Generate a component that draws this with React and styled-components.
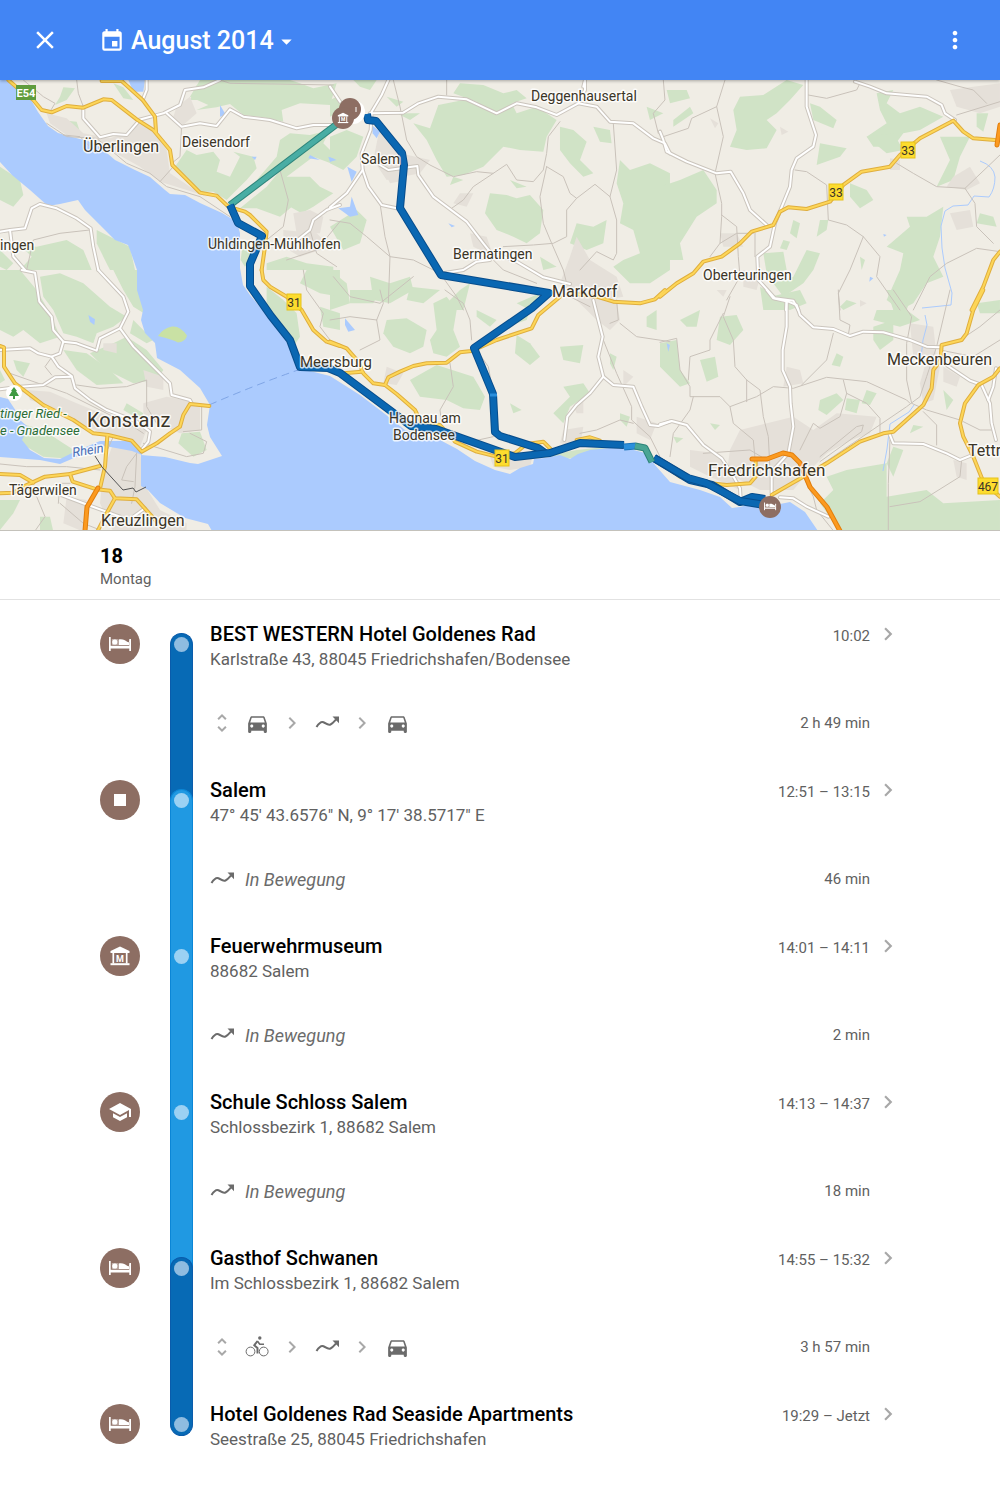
import styled, { createGlobalStyle } from 'styled-components';
import {
  MdArrowDropDown,
  MdChevronRight,
  MdClose,
  MdDirectionsCar,
  MdEvent,
  MdMoreVert,
  MdSchool,
  MdUnfoldMore,
} from 'react-icons/md';

const GlobalStyle = createGlobalStyle`
  body {
    margin: 0;
    background: #fff;
    font-family: Roboto, sans-serif;
    color: #000;
  }
`;

const StyledHeader = styled.header`
  display: flex;
  align-items: center;
  height: 80px;
  padding: 0 33px;
  box-sizing: border-box;
  background: #4285f4;
  box-shadow: 0 1px 3px #0000004d;
  position: relative;
  z-index: 1;
`;

const StyledIconButton = styled.button`
  display: flex;
  align-items: center;
  justify-content: center;
  width: 24px;
  height: 24px;
  padding: 0;
  border: 0;
  background: none;
  color: ${({ $color }) => $color || '#fff'};
  cursor: pointer;
  svg {
    flex: none;
  }
`;

const StyledMonthButton = styled.button`
  display: flex;
  align-items: center;
  margin: 0 auto 0 42px;
  padding: 2px 0 0;
  border: 0;
  background: none;
  color: #fff;
  font: 500 25px/32px Roboto, sans-serif;
  cursor: pointer;
  .event {
    margin-right: 6px;
  }
`;

const StyledMap = styled.section`
  background: #f0ede5;
  border-bottom: 1px solid #0000002e;
  > svg {
    display: block;
    width: 100%;
  }
`;

const StyledLabel = styled.text`
  font-family: Roboto, sans-serif;
  font-size: ${({ $size }) => $size}px;
  font-style: ${({ $italic }) => ($italic ? 'italic' : 'normal')};
  fill: ${({ $color }) => $color || '#3b3527'};
  stroke: #fffc;
  stroke-width: 3px;
  stroke-linejoin: round;
  paint-order: stroke;
`;

const StyledShield = styled.text`
  font-family: Roboto, sans-serif;
  font-size: ${({ $bold }) => ($bold ? 11 : 12)}px;
  font-weight: ${({ $bold }) => ($bold ? 700 : 400)};
  fill: ${({ $bold }) => ($bold ? '#fff' : '#3b3527')};
  text-anchor: middle;
`;

const StyledDay = styled.div`
  padding: 13px 100px 9px;
  border-bottom: 1px solid #e2e2e2;
`;

const StyledDayNumber = styled.h2`
  margin: 0;
  font-size: 20px;
  font-weight: 700;
  line-height: 24px;
`;

const StyledDayName = styled.div`
  font-size: 15px;
  line-height: 22px;
  color: #616161;
`;

const StyledTimeline = styled.ol`
  margin: 0;
  padding: 22px 100px 40px;
  list-style: none;
`;

const StyledItem = styled.li`
  display: grid;
  grid-template-columns: 40px 23px minmax(0, 1fr);
`;

const StyledBadge = styled.div`
  display: flex;
  align-items: center;
  justify-content: center;
  width: 40px;
  height: 40px;
  margin-top: 2px;
  border-radius: 50%;
  background: #8d6e63;
  color: #fff;
`;

const railColors = {
  drive: { fill: '#076ab5', edge: '#0a5cab', dot: '#8fbce0' },
  move: { fill: '#2099e2', edge: '#0b86d6', dot: '#9bd1f3' },
};

const StyledRail = styled.div`
  box-sizing: border-box;
  display: flex;
  justify-content: center;
  align-items: flex-start;
  margin-top: 11px;
  margin-bottom: ${({ $last }) => ($last ? 0 : -22)}px;
  height: ${({ $last }) => ($last ? '23px' : 'auto')};
  border: solid ${({ $kind }) => railColors[$kind].edge};
  border-width: ${({ $joined }) => ($joined ? '0 1px' : '1px 1px 0')};
  border-radius: ${({ $joined }) => ($joined ? '0' : '12px 12px 0 0')};
  ${({ $last }) => $last && 'border-width: 0 1px 1px; border-radius: 0 0 12px 12px;'}
  background: ${({ $kind }) => railColors[$kind].fill};
  &::before {
    content: '';
    width: 15px;
    height: 15px;
    margin-top: ${({ $joined }) => ($joined ? 4 : 3)}px;
    border-radius: 50%;
    background: ${({ $kind }) => railColors[$kind].dot};
  }
`;

const StyledRailCell = styled.div`
  display: grid;
  margin-left: 30px;
  width: 23px;
`;

const StyledEntry = styled.div`
  padding-left: 47px;
`;

const StyledStop = styled.div`
  display: flex;
  align-items: flex-start;
`;

const StyledPlace = styled.div`
  flex: 1;
  min-width: 0;
`;

const StyledTitle = styled.h3`
  margin: 0;
  font-size: 20px;
  font-weight: 500;
  line-height: 24px;
`;

const StyledAddress = styled.div`
  font-size: 17px;
  line-height: 26px;
  color: #616161;
`;

const StyledTime = styled.div`
  font-size: 15px;
  line-height: 28px;
  color: #616161;
  margin-right: 6px;
  white-space: nowrap;
`;

const StyledLeg = styled.div`
  display: flex;
  align-items: center;
  gap: 11px;
  height: 24px;
  margin: 39px 0 43px;
  padding-right: 30px;
  color: #6b6b6b;
`;

const StyledStep = styled.span`
  display: flex;
  justify-content: center;
  width: 24px;
  color: ${({ $faint }) => ($faint ? '#a8a8a8' : '#6b6b6b')};
  svg {
    flex: none;
  }
`;

const StyledMoving = styled.em`
  font-size: 18px;
`;

const StyledDuration = styled.span`
  margin-left: auto;
  font-size: 15px;
  color: #616161;
`;

const BedIcon = () => (
  <svg width="24" height="16" viewBox="0 0 24 16" fill="currentColor">
    <path d="M1 1h1.700v8.800h18.600V4.500H23V15h-1.700v-2.600H2.700V15H1z" />
    <path d="M3.800 3h6v6h-6z" fillOpacity=".45" />
    <circle cx="6.800" cy="6" r="2.600" />
    <path d="M10.600 3.600c4-.8 6.500.6 8.200 2 .9.700 1.700.7 2.400.6v2.700H10.600z" />
    <path d="M21.300 3H23v3h-1.700z" />
  </svg>
);

const MuseumIcon = () => (
  <svg width="22" height="22" viewBox="0 0 22 22" fill="none" stroke="currentColor">
    <path d="M11 1.500 20.500 6v2h-19V6z" fill="currentColor" stroke="none" />
    <path d="M4.300 8v10.500M17.700 8v10.500" strokeWidth="1.700" />
    <path d="M1.500 19.200h19" strokeWidth="2" />
    <text
      x="11"
      y="16.500"
      textAnchor="middle"
      fontFamily="Roboto, sans-serif"
      fontSize="9"
      fontWeight="700"
      fill="currentColor"
      stroke="none"
    >
      M
    </text>
  </svg>
);

const StopIcon = () => (
  <svg width="12" height="12" viewBox="0 0 12 12">
    <rect width="12" height="12" fill="currentColor" />
  </svg>
);

const MovingIcon = () => (
  <svg width="24" height="24" viewBox="0 0 24 24">
    <path
      d="M1.500 16C4 12 6 10.200 8.500 11.200c2.500 1 4 3.500 7 2.300 2-.8 3.500-2.700 5.500-5"
      fill="none"
      stroke="currentColor"
      strokeWidth="2"
    />
    <path d="M17.500 5.600H24v6.600z" fill="currentColor" />
  </svg>
);

const BikeIcon = () => (
  <svg width="24" height="24" viewBox="0 0 24 24" fill="none" stroke="currentColor">
    <circle cx="5.500" cy="16.500" r="4.400" />
    <circle cx="18.700" cy="16.500" r="4.400" />
    <circle cx="14.800" cy="3" r="1.700" fill="currentColor" stroke="none" />
    <path d="m12.500 6-3.300 4.300 3.300 2.700v5.500" strokeWidth="2" strokeLinejoin="round" />
    <path d="m12.300 6 2.500 3.200H19" strokeWidth="1.600" strokeLinejoin="round" />
  </svg>
);

const badgeIcons = {
  hotel: <BedIcon />,
  stop: <StopIcon />,
  museum: <MuseumIcon />,
  school: <MdSchool size={24} />,
};

const stepIcons = {
  car: <MdDirectionsCar size={25} />,
  bike: <BikeIcon />,
  moving: <MovingIcon />,
};

const stops = [
  {
    icon: 'hotel',
    rail: 'drive',
    title: 'BEST WESTERN Hotel Goldenes Rad',
    address: 'Karlstraße 43, 88045 Friedrichshafen/Bodensee',
    time: '10:02',
    leg: { steps: ['car', 'moving', 'car'], duration: '2 h 49 min' },
  },
  {
    icon: 'stop',
    rail: 'move',
    title: 'Salem',
    address: '47° 45\' 43.6576" N, 9° 17\' 38.5717" E',
    time: '12:51 – 13:15',
    leg: { label: 'In Bewegung', duration: '46 min' },
  },
  {
    icon: 'museum',
    rail: 'move',
    title: 'Feuerwehrmuseum',
    address: '88682 Salem',
    time: '14:01 – 14:11',
    leg: { label: 'In Bewegung', duration: '2 min' },
  },
  {
    icon: 'school',
    rail: 'move',
    title: 'Schule Schloss Salem',
    address: 'Schlossbezirk 1, 88682 Salem',
    time: '14:13 – 14:37',
    leg: { label: 'In Bewegung', duration: '18 min' },
  },
  {
    icon: 'hotel',
    rail: 'drive',
    title: 'Gasthof Schwanen',
    address: 'Im Schlossbezirk 1, 88682 Salem',
    time: '14:55 – 15:32',
    leg: { steps: ['bike', 'moving', 'car'], duration: '3 h 57 min' },
  },
  {
    icon: 'hotel',
    rail: 'drive',
    title: 'Hotel Goldenes Rad Seaside Apartments',
    address: 'Seestraße 25, 88045 Friedrichshafen',
    time: '19:29 – Jetzt',
  },
];

// The map is kept in tiles, each with its own origin and three units to a pixel.
const tiles = [
  {
    at: [0, 0],
    woods: [
      '600,240 570,290 625,315 590,330 650,322 690,312 730,345 790,352 850,365 845,330 900,310 990,315 1010,250 940,265 900,250 870,240',
      '560,450 590,465 640,455 660,480 650,515 690,530 720,470 700,455 760,470 770,505 740,540 700,580 680,600 640,575 600,575 560,530 525,500',
      '870,400 930,405 990,390 970,430 1000,460 1020,500 940,470 900,500 860,530 930,530 960,560 1000,580 940,620 905,640 870,620 900,600 840,650 770,625 720,625 800,560 850,500 770,540 830,470 840,420',
      '190,262 225,265 200,300 165,315 180,290',
      '340,250 370,262 400,300 370,295',
      '180,360 230,365 240,395 200,380',
      '0,500 60,540 70,585 40,620 0,600',
      '60,735 110,740 200,720 250,750 275,810 60,810 95,770',
      '290,690 390,740 405,810 330,810 310,770 290,730',
      '0,750 40,790 20,810 0,800',
      '730,720 760,770 735,800 722,780',
      '800,790 860,770 920,790 1000,800 1000,810 800,810',
      '590,255 600,300 570,300',
    ],
    towns: [
      '140,340 200,355 250,400 330,415 390,395 420,360 460,390 500,450 510,520 570,560 620,590 560,570 480,545 420,500 330,450 270,415 200,405 150,370',
      '530,320 570,290 590,340 550,375 520,350',
      '880,640 930,630 970,650 960,700 890,700',
      '850,690 950,700 990,740 900,770 850,740',
    ],
    lakes: ['385,240 435,240 430,275 400,275', '660,315 678,345 660,350', '930,465 960,480 925,475', '755,470 770,470 765,480', '985,470 1010,480 990,485'],
    white: [
      '415,360 490,340 540,315 555,270 610,262 660,240',
      '500,340 545,380 600,370 650,378 690,328 730,350 810,360 890,385 940,375 1000,375',
      '440,240 440,270 428,300',
      '250,320 250,355 300,412 340,402 380,405 415,365',
      '0,695 30,690 75,685 95,625 120,612 170,625 230,655 272,685 280,740 295,810',
      '30,690 40,770 75,810',
      '1020,615 980,630 940,660 930,690 880,730',
    ],
    minor: [
      '70,240 130,290 165,310 150,335', '230,240 235,280 250,320', '140,370 200,410 290,415 380,490 450,520 500,560 600,590 690,650',
      '270,690 180,700 100,720 80,810', '545,375 540,470 515,490', '840,510 865,600 850,680 800,720', '660,240 690,250 1000,255',
      '190,405 240,410 270,440', '480,545 520,500', '860,780 950,750 1020,665', '930,690 950,760 1010,800',
    ],
    yellow: [
      '25,240 50,262 100,300 125,330 155,337 200,318 250,323 310,298 335,300 410,358 460,390 510,450 517,495 600,578 650,587 685,620 735,635 750,645 800,695 795,740 785,810',
      '305,243 365,243 428,300 465,350 468,395',
    ],
  },
  {
    at: [330, 70],
    woods: [
      '325,105 400,90 470,100 540,90 560,130 620,110 680,150 650,200 640,245 570,240 520,230 460,290 400,315 350,320 320,270 290,210 250,160 300,175',
      '390,40 460,45 520,70 560,60 590,85 500,115 440,95 370,70',
      '690,170 730,180 770,215 750,270 790,310 760,320 720,280 690,240',
      '790,170 840,180 845,220 810,215',
      '480,370 530,375 560,385 600,375 640,420 630,490 590,520 550,500 500,480 465,430',
      '870,270 900,300 960,280 1020,310 1020,600 960,640 900,640 850,590 880,570 930,550 910,480 870,460 880,400 860,340',
      '740,460 790,470 830,450 820,520 770,540 720,520',
      '140,30 120,60 90,50 70,30', '200,130 270,130 240,150', '20,80 60,110 0,140 0,90',
      '170,80 220,95 200,110', '0,200 50,180 100,200 80,260 40,300 0,280',
      '80,420 110,450 90,520 40,540 0,470', '120,620 180,640 240,620 250,660 180,700 130,690',
      '0,600 50,640 60,700 0,720', '390,660 420,640 400,720 330,720', '370,320 400,330 360,345',
      '630,560 680,590 640,600', '540,330 590,350 560,355', '580,400 600,420 590,430',
      '240,650 330,660 280,700 230,690', '950,110 1000,130 960,150',
    ],
    towns: [
      '150,170 210,250 300,270 270,310 170,330 130,270', '160,300 220,290 230,330 180,340',
      '420,490 470,500 490,560 430,530', '740,500 780,570 860,620 880,680 760,700 690,640 720,560', '390,370 430,370 410,410 370,400',
    ],
    lakes: ['125,165 150,185 140,205 128,190', '52,290 80,305 65,335', '65,380 85,435 60,440 25,415 60,410', '355,460 375,468 365,472', '0,262 15,268 0,275'],
    white: [
      '120,130 220,128 265,100 325,80 410,88 500,130 560,100 620,112 680,135 745,100 765,60 765,30',
      '745,100 800,110 840,155 910,160 970,205 1005,220 1020,250',
      '175,30 155,75 125,125 122,180 95,250 98,300 50,370 0,412',
      '98,300 115,350 155,405 200,415',
      '150,285 175,300 262,288 265,315 310,380 410,455 460,520 480,545',
      '480,545 560,575 640,622 720,642',
      '340,610 400,600 440,575 480,570', '0,50 30,95', '765,30 760,50',
    ],
    minor: [
      '190,30 210,110 230,210 260,260 300,285 370,320 440,305 490,310 530,283 560,330 610,335 640,300 650,250 655,200 690,155',
      '490,310 430,350 400,390 365,415', '650,290 630,380 640,460 665,520 700,600 710,640',
      '650,290 700,320 720,370 740,385 710,420 710,500 670,520 610,525 520,530',
      '740,385 795,343 840,380 860,450 860,550 850,570 800,545 750,600',
      '850,160 860,300 840,380', '150,400 165,500 180,560 175,700', '0,450 60,460 110,500 180,560 250,570 330,610',
      '330,610 380,680 400,720', '350,30 350,75', '1000,30 1005,90 970,130 985,190', '480,560 520,600 620,640',
      '10,620 60,680 150,700 250,620',
    ],
    yellow: [],
  },
  {
    at: [660, 70],
    woods: [
      '240,80 310,75 380,30 430,45 390,90 350,130 320,150 350,180 320,235 260,240 210,230 230,180 220,120',
      '0,350 60,330 130,300 170,360 170,400 110,440 85,480 60,520 70,570 0,570',
      '650,70 700,60 680,100 720,130 780,110 850,140 780,180 730,190 700,230 640,230 620,200 680,160 660,120',
      '620,200 700,190 730,240 680,250', '450,100 480,110 530,150 520,175 460,150', '480,220 560,235 540,260 470,285',
      '840,200 930,200 900,260 880,330 830,350 870,270', '740,440 800,440 850,410 840,500 820,560 850,620 800,640 760,700 720,720 680,690 720,600 730,550 680,530 750,470',
      '570,340 620,360 640,390 600,415 570,380', '480,450 505,450 500,480 470,500', '400,450 420,460 410,505 390,490', '960,430 1000,440 1010,470 950,460',
      '370,510 390,515 380,540 360,535', '440,540 480,550 460,600 430,640 370,680 340,640 400,620', '310,550 370,545 380,600 320,610',
      '40,150 90,110 100,130 40,170', '950,130 985,130 970,185 950,170', '20,60 80,60 90,85 30,100',
      '600,560 615,570 605,600', '300,650 350,680 390,700 380,720 310,720',
    ],
    towns: [
      '870,60 940,50 1020,40 1020,110 960,130 890,110', '880,320 930,290 960,340 920,360 860,350', '180,490 230,490 250,530 190,530',
      '690,265 720,270 720,300 690,300', '870,430 930,420 940,470 890,480', '360,170 385,185 365,195', '150,145 175,160 165,175', '250,600 300,620 290,660 250,650',
    ],
    lakes: ['630,620 640,625 628,635', '670,492 680,495 672,500'],
    white: [
      '0,185 10,210 20,245 80,275 170,310 212,305 250,370 270,420 320,465',
      '440,30 440,110 468,195 460,230 410,265 395,300 390,350 345,460 330,530 292,560 295,630 345,685 400,692 415,720',
      '585,35 630,50 680,70 800,80 845,105 855,130 885,150', '380,690 378,720',
    ],
    minor: [
      '195,30 170,110 95,145 85,175 10,200', '170,110 190,200 165,310 185,400 185,440 180,520 150,560',
      '185,435 230,470 235,560 240,620 200,690', '405,300 440,305 500,345 505,450 560,465 610,500 660,560 650,620 720,720',
      '610,500 570,600 535,670 540,720', '445,75 500,85 590,60 600,40', '710,280 760,310 830,350 915,355 1020,255',
      '890,135 1020,95', '830,30 900,50 940,60 980,100', '180,520 230,490 280,490', '285,490 285,560',
      '1020,545 950,535 860,580 810,620 760,720', '915,355 945,400 950,470 1000,520',
    ],
    yellow: ['0,680 50,640 100,610 130,575 185,560 240,520 275,485 340,465 360,425 385,412 440,417 510,395 550,345 605,305 690,290 720,255 780,205 880,152 910,185 940,205 1005,210', '1020,545 1000,570 970,650 935,720'],
  },
  {
    at: [0, 270],
    woods: [
      '0,0 60,0 110,60 150,130 180,200 120,220 70,180 40,200 0,180',
      '120,20 180,10 250,40 330,110 380,140 340,170 290,190 280,220 230,200 190,190 160,120 130,80',
      '340,0 412,0 420,60 432,130 400,110 370,60', '380,200 440,240 490,300 470,330 400,340 320,300 270,250 340,220',
      '190,240 260,250 330,300 370,340 290,345 230,300', '0,60 50,70 90,120 60,160 0,150',
      '545,490 600,485 620,540 580,560 535,520', '60,460 130,480 190,520 230,545 190,565 130,560 80,530 45,490',
      '0,690 60,690 40,730 0,780', '120,740 150,740 160,785 120,785', '400,150 460,210 440,220 390,190',
      '800,50 850,90 890,130 900,200 880,230 840,170 800,110', '920,0 1020,0 1020,80 960,70 900,40', '960,110 1020,130 1020,180 970,170',
      '0,300 15,330 0,340', '40,270 90,280 70,320 50,300', '380,400 430,430 420,450 370,420',
    ],
    towns: [
      '80,360 150,365 230,400 330,440 440,480 420,530 330,500 240,460 150,410 90,390',
      '340,520 420,540 430,640 480,720 560,760 560,785 340,785 300,700 310,600',
      '430,400 500,380 600,400 600,480 540,490 470,460 430,430', '430,300 490,320 490,360 440,350', '310,220 350,220 350,250 310,240', '200,680 260,690 250,785 190,760',
    ],
    lakes: ['265,135 285,148 283,165 270,155'],
    white: [
      '65,0 105,8 118,95 155,140 160,180 190,215 180,250 155,260 175,290 215,318 225,355 270,390 320,420 410,455 450,485 445,515 425,540',
      '190,215 230,220 290,242 300,205 360,175 385,125 370,80 295,0', '360,175 400,230 510,340 515,375 570,390 575,400',
      '0,240 90,235 115,250 155,260', '0,358 60,350 130,345 165,322 215,320', '170,670 250,700 360,740 370,750', '400,740 435,715',
    ],
    minor: [
      '100,790 135,740 110,680 60,640', '0,582 80,590 200,590 300,600', '230,345 300,355 380,350 440,330 440,410 470,460',
      '155,262 135,290 155,315', '570,490 620,515 610,550 560,560 430,520', '605,410 605,480 550,485', '410,550 405,650 395,700', '410,550 380,590 365,630 400,635',
      '175,700 180,640 210,640', '180,700 250,760 300,780', '320,545 340,500', '910,0 920,60 970,130 960,170 990,210', '30,310 200,370 400,470 430,490',
    ],
    yellow: [
      '0,228 12,232 12,290 45,340 130,405 220,450 280,490 325,495 395,512 425,545 470,520 510,490 540,470 550,435 570,402 628,408',
      '322,498 315,590 300,655', '0,612 60,615 100,638', '0,670 40,668 70,650 135,620 210,612 300,588',
      '210,612 218,635 290,658 330,662 345,685 410,688 470,755', '345,685 320,730 292,785',
      '785,0 790,30 810,50 860,80 905,120 940,180 980,215 1020,228',
    ],
  },
  {
    at: [330, 290],
    woods: [
      '60,0 150,0 130,40 60,40', '170,90 230,85 290,120 280,170 240,190 190,170 160,130', '310,40 350,20 380,60 370,120 390,170 350,200 310,190 300,150 320,120',
      '240,270 320,225 430,260 465,320 450,360 400,355 350,330 270,320', '560,135 600,160 630,200 600,225 555,190', '690,170 760,165 750,220 700,210',
      '700,290 760,280 780,310 720,350 700,400 670,370 720,320', '440,60 500,90 480,110 440,80', '540,340 575,360 550,370', '500,120 560,80 600,60 590,90 530,110',
      '870,370 900,380 890,410 870,390', '840,190 860,200 850,240 840,220', '950,80 980,60 980,120 950,110', '560,40 630,10 600,60',
      '660,495 740,480 830,470 900,480 860,490 760,500 680,510',
    ],
    towns: [
      '730,20 800,10 860,30 870,90 840,120 800,90', '170,230 220,250 200,285 160,280', '700,420 760,410 750,470 690,460', '480,500 540,510 610,490 600,530 540,540 490,530',
      '730,345 760,330 760,370 740,370', '920,380 980,400 960,450 920,430', '880,240 910,260 880,290',
    ],
    lakes: ['45,85 75,120 55,125 45,105', '1010,160 1020,165 1015,185'],
    white: [
      '790,30 805,90 818,140 805,200 820,260 780,310 740,345 712,380 703,450', '820,260 850,285 910,290 935,350 960,405 985,408 1020,395',
    ],
    minor: [
      '140,90 150,150 90,180', '140,90 60,80 0,90', '140,90 160,40 150,0', '360,220 370,290 330,360 335,400', '345,0 400,40 420,90 425,150',
      '440,180 475,230 490,310', '860,30 865,90 840,100', '870,100 920,140 1020,155', '820,150 860,250 905,350 905,390 960,440 990,500',
      '750,430 800,420 870,390 910,400', '700,10 780,50', '400,460 490,440',
    ],
    yellow: [
      '0,155 50,175 85,215 100,250 130,280 165,285 200,312 255,360 275,400 330,405 375,455 440,485 500,500 555,490 590,462 640,455 665,480',
      '165,285 175,262 210,245 250,228 290,220 350,218 390,187 425,183 500,150 605,115 625,75 690,20',
      '740,450 780,442 810,452', '0,235 40,250 95,245', '720,10 800,20 850,35 930,40 975,28 1005,0',
    ],
  },
  {
    at: [660, 290],
    woods: [
      '180,80 230,75 250,120 210,165 170,150', '120,210 165,200 175,260 140,275', '640,110 700,90 700,150 660,180 640,150', '680,0 760,0 740,60 780,90 720,110 640,90 650,60 700,60',
      '560,540 680,520 680,620 800,600 850,640 1020,630 1020,722 540,722 480,640 520,600 500,560', '480,330 530,310 550,330 500,375 475,360', '560,325 600,330 590,370 555,360',
      '620,300 650,310 630,345 605,340', '850,300 880,330 860,360', '60,90 120,60 110,110 80,110', '0,160 50,150 60,240 90,280 60,290 0,230', '530,190 550,200 540,230 515,225',
      '330,20 420,0 440,40 390,60 340,50', '540,50 560,30 590,40 550,60', '760,405 790,410 750,430', '250,440 310,450 280,490 240,470', '950,40 1020,30 1020,70 960,70', '700,470 730,480 700,560 680,520', '150,400 180,405 165,420', '40,440 70,445 50,460',
    ],
    towns: [
      '240,420 400,380 460,420 530,370 650,380 630,430 520,470 450,540 400,600 300,600 200,550 210,480', '380,230 420,240 430,280 370,290', '850,230 900,260 890,290 850,275',
      '750,100 820,110 830,200 760,200', '880,510 920,520 920,570 890,560', '90,480 170,490 220,560 240,600 150,560 90,530', '800,210 840,230 820,330 790,340 780,280', '170,0 200,0 190,20', '600,30 620,40 600,50', '450,450 610,380 630,420 480,500',
    ],
    lakes: [],
    white: [
      '320,0 340,25 385,35 410,45 420,75 460,112 520,117 570,138 610,125 670,127 750,150 800,170 840,172',
      '380,35 380,110 368,180 368,240 390,290 392,340 400,410 385,490', '860,225 930,272 965,285 990,340 995,400 1008,450',
      '1008,235 1000,290 985,330', '688,430 700,460 790,462 860,490 900,510 930,498', '0,403 35,393 80,405 130,465 185,505 215,550 240,595 242,628',
      '385,490 335,545 335,610', '360,622 400,625 440,650 505,680',
    ],
    minor: [
      '0,157 50,145 60,240 90,290 90,320 180,320 210,350 290,320 340,290 400,295 500,262 620,275 740,330 750,340', '210,20 190,80 220,150 225,230 260,270 300,300 310,380 325,440 330,540',
      '190,70 150,150 150,180 90,200 85,270', '260,270 260,335', '100,320 90,360 40,430 30,500', '210,350 220,400 280,450 290,560', '425,285 500,210 520,130',
      '535,0 540,90 570,105 565,135', '550,270 560,310 540,380 480,415 460,400 420,480', '560,310 620,340 660,385 660,430', '700,0 755,80 740,160 740,270 755,340 800,360 900,390',
      '790,365 830,405 830,465', '870,0 830,170 800,260 780,320 740,350 490,520', '685,722 685,580 690,450', '690,650 780,635 900,560 905,510', '1020,60 960,110 900,150', '480,500 590,410 610,405 605,425 480,515', '130,490 270,480 320,510', '420,540 460,620 470,660 520,722', '1020,150 940,200 840,180', '910,395 960,420 1000,420',
    ],
    yellow: [
      '970,0 940,60 920,130 905,150 845,165 842,210 820,240 815,295 790,345 700,425 670,430 600,455 500,520 335,615',
      '1020,235 1000,260 955,285 915,340 900,400 910,440 940,500 970,575 1020,620', '40,545 60,560 110,575 200,585 270,580 287,560 287,510',
    ],
  },
];

const tileTransform = ({ at }) => `translate(${at[0]} ${at[1]}) scale(.3333)`;

const Shapes = ({ layer, fill }) =>
  tiles.map((tile) => (
    <g key={tile.at.join()} transform={tileTransform(tile)} fill={fill}>
      {tile[layer].map((points) => (
        <polygon key={points} points={points} />
      ))}
    </g>
  ));

const Roads = ({ layer, stroke, width }) =>
  tiles.map((tile) => (
    <g
      key={tile.at.join()}
      transform={tileTransform(tile)}
      fill="none"
      stroke={stroke}
      strokeWidth={width * 3}
      strokeLinejoin="round"
      strokeLinecap="round"
    >
      {tile[layer].map((points) => (
        <polyline key={points} points={points} />
      ))}
    </g>
  ));

const lakeShore =
  'M0 80 6 80 16 88 30 98 38 112 48 126 58 133 72 137 88 141 100 147 115 160 135 170 150 177 165 190 170 194 185 195 200 203 222 213 237 222 240 233 240 268 243 285 250 295 265 313 285 338 298 368 330 376 360 395 385 414 405 430 440 440 457 449 475 461 495 470 510 474 520 468 533 464 534 459 545 458 560 455 570 459 578 454 590 450 610 448 630 449 645 453 655 465 670 482 685 486 700 490 720 497 732 508 740 507 750 504 765 507 790 502 805 512 818 531 212 531 208 524 185 518 175 512 160 503 148 490 141 486 141 455 165 457 190 463 198 464 222 456 210 437 207 425 210 405 200 388 180 370 157 358 155 343 145 333 141 320 143 310 140 300 137 290 137 270 130 250 128 245 115 240 100 225 85 210 78 200 60 204 48 206 30 190 12 175 0 162z';

const orangeRoads = ['98,488 87,507 85,531', '752,459 767,459 783,453 792,455 800,463 810,487 827,507 840,531', '1000,125 997,145'];

const coastRoute = '230,205 238,223 262,236 250,264 250,286 271,316 290,340 300,367 328,368 340,373 411,426 436,429 515,457 550,453 580,443 624,445';
const inlandRoute = '367,114 368,120 376,121 402,153 404,165 400,208 441,275 549,293 532,308 474,348 493,394 495,432 500,436 538,448 545,453';
const harbourRoute = '654,458 688,478 706,483 740,501 765,505';
const harbourReturn = '654,458 690,480 712,485 740,502 752,497 765,499';

const labels = [
  ['Überlingen', 83, 152, 16],
  ['Deisendorf', 182, 147, 14],
  ['Uhldingen-Mühlhofen', 208, 249, 14],
  ['ingen', 0, 250, 14],
  ['Salem', 361, 164, 14],
  ['Deggenhausertal', 531, 101, 14],
  ['Bermatingen', 453, 259, 14],
  ['Markdorf', 552, 297, 16],
  ['Oberteuringen', 703, 280, 14],
  ['Meckenbeuren', 887, 365, 16],
  ['Meersburg', 300, 367, 15],
  ['Konstanz', 87, 427, 20],
  ['Tägerwilen', 9, 495, 14],
  ['Kreuzlingen', 101, 526, 16],
  ['Hagnau am', 389, 423, 14],
  ['Bodensee', 393, 440, 14],
  ['Friedrichshafen', 708, 476, 17],
  ['Tettr', 968, 456, 16],
];

const shields = [
  ['33', 908, 150],
  ['33', 836, 192],
  ['31', 294, 302],
  ['31', 502, 458],
  ['467', 988, 486],
];

const Route = ({ points, color = '#0a67b2', edge = '#084d8c', width = 8 }) => (
  <g fill="none" strokeLinejoin="round">
    <polyline points={points} stroke={edge} strokeWidth={width} />
    <polyline points={points} stroke={color} strokeWidth={width - 2} />
  </g>
);

const Map = () => (
  <StyledMap aria-label="Karte">
    <svg viewBox="0 80 1000 450">
      <Shapes layer="woods" fill="#d0e3c6" />
      <Shapes layer="towns" fill="#e5e0d9" />
      <path d={lakeShore} fill="#abcbfe" />
      <path
        d="M0 397 8 399 16 411 20 420 28 427 22 440 30 450 44 458 60 459 74 452 100 441 130 441 142 450 142 455 132 451 105 446 88 452 60 464 40 460 0 457z"
        fill="#abcbfe"
      />
      <path d="M158 336q5-8 14-9.500 8-1 15 9-1 6-9 7-5-3-20-6.500" fill="#c9e1a4" />
      <path d="M980 161q14 5 15 16 0 12-6 20l-15-1-6 9-15 1-8 5-4 15 1 22 3 20 7 25-1 12-29 3M925 315l2 10-4 15-2 18M914 405l-5 7-19 12-3 25-4 22M773 506v20" fill="none" stroke="#abcbfe" />
      <Shapes layer="lakes" fill="#abcbfe" />
      <path d="M209 405Q255 385 298 370" fill="none" stroke="#7fa5e6" strokeDasharray="8 5" />
      <Roads layer="minor" stroke="#c9c2ba" width={1} />
      <Roads layer="white" stroke="#cbc5bd" width={4} />
      <Roads layer="white" stroke="#fff" width={2} />
      <Roads layer="yellow" stroke="#dfae3e" width={4} />
      <Roads layer="yellow" stroke="#fdd658" width={2} />
      <g fill="none" strokeLinejoin="round" strokeLinecap="round">
        {orangeRoads.map((points) => (
          <polyline key={points} points={points} stroke="#e27e0c" strokeWidth="5" />
        ))}
        {orangeRoads.map((points) => (
          <polyline key={points} points={points} stroke="#fb9a20" strokeWidth="3" />
        ))}
      </g>
      <path d="M95 456 102 467 123 490 133 488 136 492 146 487" fill="none" stroke="#555" />

      <Route points="230,205 345,118" color="#49ada4" edge="#2d8379" width={7} />
      <Route points={inlandRoute} />
      <Route points={coastRoute} />
      <Route points={harbourReturn} />
      <Route points={harbourRoute} />
      <Route points="624,447 636,446" color="#2b8fdc" edge="#1c74ba" width={7} />
      <Route points="635,446 645,448 652,462" color="#49a594" edge="#2d8379" width={7} />
      <path d="M490 395h7" stroke="#2b8fdc" strokeWidth="3" />

      <circle cx="14" cy="393" r="8" fill="#fff" />
      <path d="m14 387 3 4h-1l3 5h-4v3h-2v-3H9l3-5h-1z" fill="#3f9a43" />
      {labels.map(([text, x, y, size]) => (
        <StyledLabel key={text} x={x} y={y} $size={size}>
          {text}
        </StyledLabel>
      ))}
      <StyledLabel x="0" y="418" $size={13} $italic $color="#2c6e37">
        tinger Ried -
      </StyledLabel>
      <StyledLabel x="0" y="435" $size={13} $italic $color="#2c6e37">
        e - Gnadensee
      </StyledLabel>
      <StyledLabel x="73" y="457" $size={13} $italic $color="#4a6fb5" transform="rotate(-9 73 457)">
        Rhein
      </StyledLabel>

      {shields.map(([text, x, y]) => {
        const half = text.length > 2 ? 10 : 7;
        return (
          <g key={`${x}-${y}`}>
            <rect x={x - half} y={y - 8} width={half * 2} height="16" fill="#fddc2e" stroke="#e5c21c" />
            <StyledShield x={x} y={y + 5}>
              {text}
            </StyledShield>
          </g>
        );
      })}
      <rect x="16" y="85" width="20" height="15" fill="#5f9c3d" />
      <StyledShield x="26" y="97" $bold>
        E54
      </StyledShield>

      <circle cx="353" cy="112" r="12" fill="#fff" />
      <g fill="#8d6e63">
        <circle cx="350" cy="109" r="11" />
        <circle cx="343" cy="118" r="11" />
        <circle cx="770" cy="507" r="11" />
      </g>
      <path d="M356 107v5" stroke="#fff" />
      <g color="#fff" transform="translate(337 112) scale(.55)">
        <MuseumIcon />
      </g>
      <g color="#fff" transform="translate(763.500 502) scale(.55)">
        <BedIcon />
      </g>
    </svg>
  </StyledMap>
);

const Leg = ({ leg }) => (
  <StyledLeg>
    {leg.steps ? (
      <>
        <StyledIconButton aria-label="Details einblenden" $color="#a8a8a8">
          <MdUnfoldMore size={24} />
        </StyledIconButton>
        {leg.steps.flatMap((step, index) => [
          index > 0 && (
            <StyledStep key={`next-${index}`} $faint>
              <MdChevronRight size={24} />
            </StyledStep>
          ),
          <StyledStep key={index}>{stepIcons[step]}</StyledStep>,
        ])}
      </>
    ) : (
      <>
        <StyledStep>{stepIcons.moving}</StyledStep>
        <StyledMoving>{leg.label}</StyledMoving>
      </>
    )}
    <StyledDuration>{leg.duration}</StyledDuration>
  </StyledLeg>
);

const Timeline = () => (
  <StyledTimeline>
    {stops.map((stop, index) => (
      <StyledItem key={stop.title}>
        <StyledBadge>{badgeIcons[stop.icon]}</StyledBadge>
        <StyledRailCell>
          <StyledRail
            $kind={stop.rail}
            $joined={index > 0 && stops[index - 1].rail === stop.rail}
            $last={index === stops.length - 1}
          />
        </StyledRailCell>
        <StyledEntry>
          <StyledStop>
            <StyledPlace>
              <StyledTitle>{stop.title}</StyledTitle>
              <StyledAddress>{stop.address}</StyledAddress>
            </StyledPlace>
            <StyledTime>{stop.time}</StyledTime>
            <StyledIconButton aria-label={stop.title} $color="#a8a8a8">
              <MdChevronRight size={26} />
            </StyledIconButton>
          </StyledStop>
          {stop.leg && <Leg leg={stop.leg} />}
        </StyledEntry>
      </StyledItem>
    ))}
  </StyledTimeline>
);

const App = () => (
  <>
    <GlobalStyle />
    <StyledHeader>
      <StyledIconButton aria-label="Schließen">
        <MdClose size={30} />
      </StyledIconButton>
      <StyledMonthButton>
        <MdEvent className="event" size={26} />
        August 2014
        <MdArrowDropDown size={25} />
      </StyledMonthButton>
      <StyledIconButton aria-label="Menü">
        <MdMoreVert size={28} />
      </StyledIconButton>
    </StyledHeader>
    <main>
      <Map />
      <StyledDay>
        <StyledDayNumber>18</StyledDayNumber>
        <StyledDayName>Montag</StyledDayName>
      </StyledDay>
      <Timeline />
    </main>
  </>
);

export default App;
